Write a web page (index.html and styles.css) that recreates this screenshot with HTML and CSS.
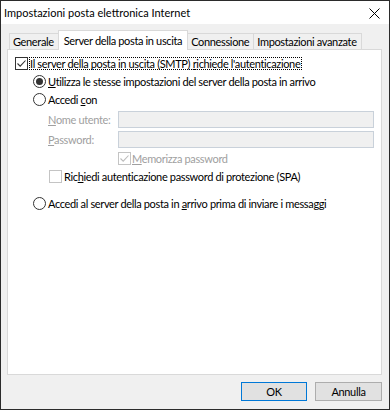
FILE: index.html
```html
<!DOCTYPE html>
<html lang="it">
<head>
    <meta charset="UTF-8">
    <meta name="viewport" content="width=device-width, initial-scale=1.0">
    <title>Impostazioni posta elettronica Internet</title>
    <link rel="stylesheet" href="styles.css">
</head>
<body>

    <div class="finestra">
        <div class="barra-titolo">
            <span class="titolo">Impostazioni posta elettronica Internet</span>
            <svg class="chiudi" width="11" height="11" viewBox="0 0 11 11">
                <path d="M0.5 0.5L10.5 10.5M10.5 0.5L0.5 10.5" stroke="#000" stroke-width="1" fill="none"/>
            </svg>
        </div>

        <div class="contenuto">
            <div class="schede">
                <div class="scheda">Generale</div>
                <div class="scheda attiva">Server della posta in uscita</div>
                <div class="scheda">Connessione</div>
                <div class="scheda">Impostazioni avanzate</div>
            </div>

            <div class="pannello">
                <div class="riga riga-auth">
                    <span class="casella">
                        <svg width="11" height="11" viewBox="0 0 11 11"><path d="M1.5 5.5L4.2 8.2L9.5 2.5" stroke="#333" stroke-width="1.1" fill="none"/></svg>
                    </span>
                    <span class="focus">Il server della posta in uscita (SMTP) <u>r</u>ichiede l'autenticazione</span>
                </div>

                <div class="riga rientro">
                    <span class="radio selezionato"></span>
                    <span><u>U</u>tilizza le stesse impostazioni del server della posta in arrivo</span>
                </div>
                <div class="riga rientro">
                    <span class="radio"></span>
                    <span>Accedi <u>c</u>on</span>
                </div>

                <div class="campo campo-primo">
                    <label class="etichetta"><u>N</u>ome utente:</label>
                    <input class="testo" type="text" disabled>
                </div>
                <div class="campo">
                    <label class="etichetta"><u>P</u>assword:</label>
                    <input class="testo" type="password" disabled>
                </div>

                <div class="riga memorizza disabilitato">
                    <span class="casella casella-off">
                        <svg width="11" height="11" viewBox="0 0 11 11"><path d="M1.5 5.5L4.2 8.2L9.5 2.5" stroke="#bcbcbc" stroke-width="1.1" fill="none"/></svg>
                    </span>
                    <span><u>M</u>emorizza password</span>
                </div>
                <div class="riga spa">
                    <span class="casella casella-off"></span>
                    <span>Ric<u>h</u>iedi autenticazione password di protezione (SPA)</span>
                </div>

                <div class="riga rientro ultima">
                    <span class="radio"></span>
                    <span>Accedi al server della posta in <u>a</u>rrivo prima di inviare i messaggi</span>
                </div>
            </div>

            <div class="pulsanti">
                <button class="pulsante predefinito">OK</button>
                <button class="pulsante">Annulla</button>
            </div>
        </div>
    </div>

</body>
</html>
```
FILE: styles.css
```css
body {
    margin: 0;
    background: #f0f0f0;
    font-family: Lato, "Noto Sans", sans-serif;
    font-size: 11px;
    color: #000;
}
u {
    text-decoration-thickness: 1px;
    text-underline-offset: 1px;
}
.finestra {
    width: 390px;
    height: 410px;
    box-sizing: border-box;
    border: 1px solid #2b2b2b;
    background: #f0f0f0;
    display: flex;
    flex-direction: column;
}
.barra-titolo {
    height: 23px;
    background: #fff;
    display: flex;
    align-items: center;
    padding: 0 9px 0 3px;
}
.titolo {
    font-size: 11px;
    margin-top: -1px;
}
.chiudi {
    margin-left: auto;
    margin-top: 1px;
}
.contenuto {
    flex: 1;
    display: flex;
    flex-direction: column;
    padding: 6px 7px 0 6px;
    letter-spacing: -0.35px;
}

/* schede */
.schede {
    display: flex;
    align-items: flex-end;
    height: 19px;
    padding-left: 2px;
    position: relative;
    z-index: 1;
}
.scheda {
    height: 16px;
    box-sizing: border-box;
    line-height: 15px;
    padding: 0 4px 0 3px;
    border: 1px solid #d9d9d9;
    border-bottom: none;
    background: #f0f0f0;
    margin-left: -1px;
    white-space: nowrap;
}
.scheda:first-child {
    margin-left: 0;
}
.scheda.attiva {
    height: 20px;
    margin-bottom: -1px;
    padding: 2px 5px;
    background: #fff;
    position: relative;
}

/* pannello */
.pannello {
    height: 326px;
    box-sizing: border-box;
    background: #fff;
    border: 1px solid #d9d9d9;
    padding: 5px 0 0 7px;
}
.riga {
    display: flex;
    align-items: center;
    height: 18px;
    white-space: nowrap;
}
.riga-auth {
    height: 17px;
}
.rientro {
    margin-left: 18px;
}
.casella {
    width: 13px;
    height: 13px;
    box-sizing: border-box;
    border: 1px solid #333;
    background: #fff;
    margin-right: 1px;
    display: flex;
    align-items: center;
    justify-content: center;
    flex-shrink: 0;
}
.casella-off {
    border-color: #c4c4c4;
}
.focus {
    border: 1px dotted #000;
    line-height: 11px;
    padding: 0 1px 0 0;
}
.radio {
    width: 13px;
    height: 13px;
    box-sizing: border-box;
    border: 1px solid #333;
    border-radius: 50%;
    background: #fff;
    margin-right: 2px;
    display: flex;
    align-items: center;
    justify-content: center;
    flex-shrink: 0;
}
.radio.selezionato::after {
    content: "";
    width: 7px;
    height: 7px;
    border-radius: 50%;
    background: #333;
}

/* campi */
.campo {
    display: flex;
    align-items: center;
    height: 20px;
    margin-left: 33px;
}
.campo-primo {
    margin-top: 1px;
}
.etichetta {
    width: 70px;
    color: #a0a0a0;
}
.testo {
    width: 256px;
    height: 17px;
    box-sizing: border-box;
    margin: 0;
    border: 1px solid #c9d1da;
    background: #f0f0f0;
}
.memorizza {
    margin-left: 103px;
}
.disabilitato {
    color: #a0a0a0;
}
.spa {
    margin-left: 34px;
}
.spa .casella {
    margin-right: 2px;
}
.ultima {
    margin-top: 9px;
}

/* pulsanti */
.pulsanti {
    display: flex;
    justify-content: flex-end;
    gap: 8px;
    padding-top: 7px;
}
.pulsante {
    width: 67px;
    height: 19px;
    margin: 0;
    padding: 0;
    border: 1px solid #adadad;
    background: #e1e1e1;
    font-family: inherit;
    font-size: 11px;
    letter-spacing: -0.35px;
    color: #000;
}
.pulsante.predefinito {
    width: 66px;
    border-color: #0078d7;
}
```
